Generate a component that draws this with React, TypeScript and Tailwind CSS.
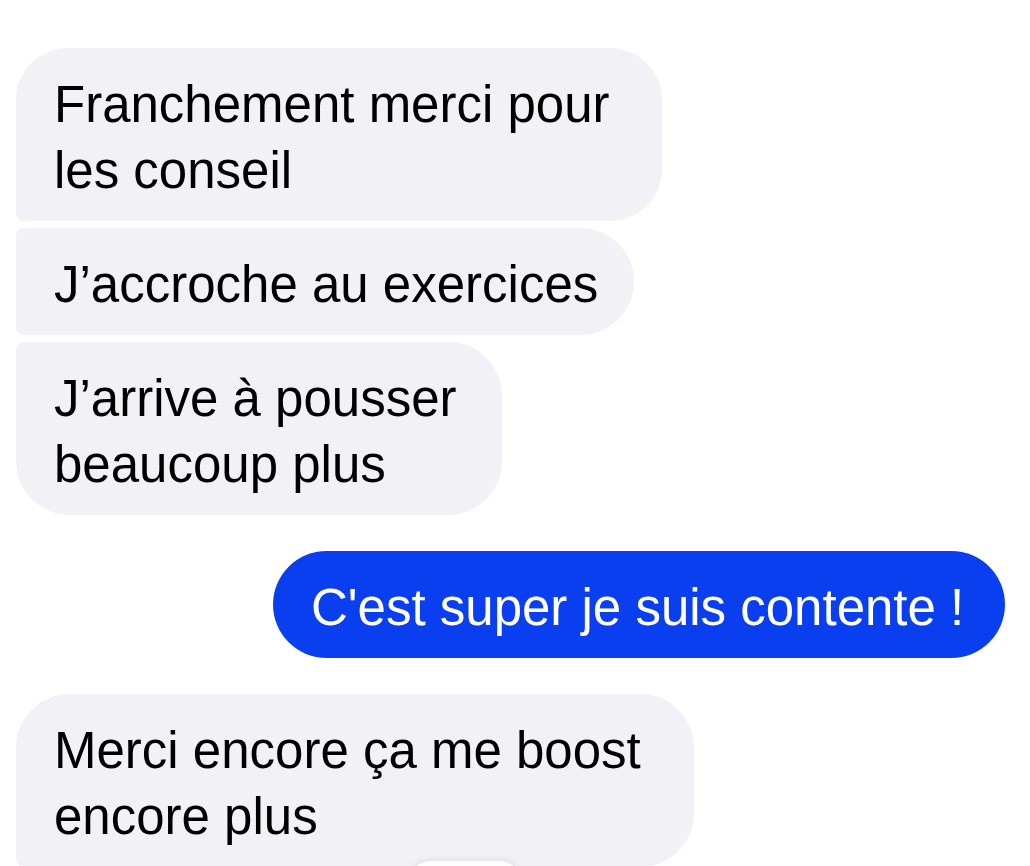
import type { ReactNode } from 'react';

const font = { fontFamily: '"Liberation Sans", Arial, sans-serif' };

function Bubble({ children, className }: { children: ReactNode; className: string }) {
    return (
        <div className={`relative pt-[24px] pb-[17px] text-[51px] leading-[66px] whitespace-nowrap ${className}`}>
            {children}
        </div>
    );
}

export default function App() {
    return (
        <div className="h-[866px] w-[1030px] overflow-hidden bg-white" style={font}>
            <div className="flex flex-col pl-[16px] pr-[25px] pt-[48px]">
                {/* incoming group */}
                <div className="flex flex-col gap-[7px]">
                    <Bubble className="w-[646px] px-[38px] bg-[#f1f1f6] text-black rounded-[52px] rounded-bl-[8px]">
                        Franchement merci pour
                        <br />
                        les conseil
                    </Bubble>
                    <Bubble className="w-[618px] px-[38px] bg-[#f1f1f6] text-black rounded-r-[54px] rounded-l-[8px]">
                        J’accroche au exercices
                    </Bubble>
                    <Bubble className="w-[486px] px-[38px] bg-[#f1f1f6] text-black rounded-[54px] rounded-tl-[8px]">
                        J’arrive à pousser
                        <br />
                        beaucoup plus
                    </Bubble>
                </div>

                {/* outgoing */}
                <div className="mt-[36px] flex justify-end">
                    <Bubble className="w-[732px] px-[38px] bg-[#0a3ff0] text-white rounded-[54px]">
                        C'est super je suis contente !
                    </Bubble>
                </div>

                <div className="mt-[36px]">
                    <Bubble className="w-[678px] px-[38px] bg-[#f1f1f6] text-black rounded-[54px] rounded-bl-[8px]">
                        Merci encore ça me boost
                        <br />
                        encore plus
                        {/* reaction pill peeking from below */}
                        <div className="absolute left-[394px] top-[167px] h-[40px] w-[110px] rounded-full bg-white shadow-[0_0_8px_rgba(0,0,0,0.1)]" />
                    </Bubble>
                </div>
            </div>
        </div>
    );
}
